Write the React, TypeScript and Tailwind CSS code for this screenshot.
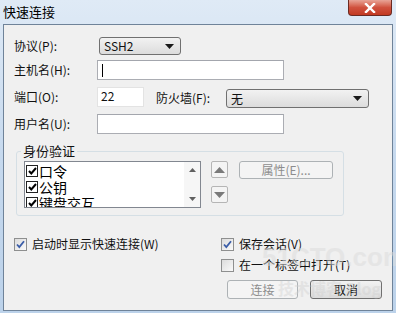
import React from 'react';

const FONT = { fontFamily: '"SimSun", "Noto Sans CJK SC", "Liberation Sans", sans-serif' };

function Caret() {
  return (
    <svg width="9" height="5" viewBox="0 0 9 5">
      <path d="M0 0h9L4.5 5z" fill="#1a1a1a" />
    </svg>
  );
}

function Select({ value, className }: { value: string; className: string }) {
  return (
    <div
      className={`flex items-center justify-between rounded-[3px] border border-[#707070] bg-gradient-to-b from-[#f2f2f2] to-[#dcdcdc] pl-[4px] pr-[6px] text-[12px] text-[#111] ${className}`}
    >
      <span>{value}</span>
      <Caret />
    </div>
  );
}

function TextBox({ cursor = false, className }: { cursor?: boolean; className: string }) {
  return (
    <div
      className={`flex items-center border border-[#abadb3] border-t-[#a3a6ad] bg-white pl-[4px] ${className}`}
    >
      {cursor && <div className="h-[13px] w-[1px] bg-black" />}
    </div>
  );
}

function WinCheck({ checked, label }: { checked: boolean; label: string }) {
  return (
    <div className="flex h-[14px] items-center gap-[5px] text-[12px] text-[#111]">
      <div className="flex h-[13px] w-[13px] items-center justify-center border border-[#8e8f8f] bg-gradient-to-br from-[#dcdcdc] to-[#fafafa]">
        {checked && (
          <svg width="9" height="9" viewBox="0 0 9 9">
            <path d="M1 4.5l2.3 2.5L8 1.2" fill="none" stroke="#3a5da8" strokeWidth="1.8" />
          </svg>
        )}
      </div>
      <span>{label}</span>
    </div>
  );
}

function ListItem({ label }: { label: string }) {
  return (
    <div className="flex h-[16px] items-center gap-[1px] text-[14px] leading-none text-black">
      <div className="flex h-[12px] w-[12px] items-center justify-center border border-[#222] bg-white">
        <svg width="9" height="8" viewBox="0 0 9 8">
          <path d="M1 4l2.3 2.5L8 1" fill="none" stroke="#000" strokeWidth="2" />
        </svg>
      </div>
      <span>{label}</span>
    </div>
  );
}

function ArrowBtn({ up }: { up: boolean }) {
  return (
    <div className="flex h-[17px] w-[17px] items-center justify-center rounded-[2px] border border-[#b5b5b5] bg-[#f4f4f4]">
      <svg width="11" height="6" viewBox="0 0 11 6">
        <path d={up ? 'M0 6h11L5.5 0z' : 'M0 0h11L5.5 6z'} fill="#7a7a7a" />
      </svg>
    </div>
  );
}

export default function App() {
  return (
    <div
      className="relative flex h-[313px] w-[396px] flex-col overflow-hidden bg-gradient-to-b from-[#dfeaf6] via-[#c6d9ee] to-[#bcd2ea]"
      style={FONT}
    >
      {/* Title bar */}
      <div className="relative flex h-[24px] items-start pl-[3px] pt-[2px]">
        <span className="text-[13px] text-black">快速连接</span>
        <div className="absolute right-[4px] top-0 flex h-[16px] w-[44px] items-center justify-center rounded-b-[4px] border border-t-0 border-[#6b2a22] bg-gradient-to-b from-[#e8a497] via-[#d0513e] to-[#c23a22]">
          <svg width="12" height="10" viewBox="0 0 12 10">
            <path d="M2 1l8 8M10 1L2 9" stroke="white" strokeWidth="2.4" strokeLinecap="square" />
          </svg>
        </div>
      </div>

      {/* Client area */}
      <div className="mx-[3px] flex h-[287px] flex-col border border-[#6f8399] bg-[#f0f0f0] pl-[10px] text-[12px] text-[#111]">
        <div className="mt-[12px] flex h-[18px] items-center">
          <div className="w-[85px]">协议(P):</div>
          <Select value="SSH2" className="h-[18px] w-[82px]" />
        </div>

        <div className="mt-[5px] flex h-[20px] items-center">
          <div className="w-[83px]">主机名(H):</div>
          <TextBox cursor className="h-[20px] w-[187px]" />
        </div>

        <div className="mt-[7px] flex h-[20px] items-start">
          <div className="flex h-[20px] w-[83px] items-center">端口(O):</div>
          <div className="h-[20px] w-[47px] border border-[#e3e3e3] bg-white pl-[3px] text-[12px] leading-[16px]">22</div>
          <div className="ml-[12px] mt-[2px] flex h-[18px] w-[70px] items-center">防火墙(F):</div>
          <Select value="无" className="mt-[2px] h-[19px] w-[143px]" />
        </div>

        <div className="mt-[7px] flex h-[20px] items-center">
          <div className="w-[83px]">用户名(U):</div>
          <TextBox className="h-[20px] w-[187px]" />
        </div>

        {/* Auth group */}
        <div className="relative ml-[2px] mt-[17px] h-[65px] w-[328px] rounded-[3px] border border-[#d5dfe5]">
          <div className="absolute -top-[9px] left-[4px] bg-[#f0f0f0] px-[2px] text-[13px] leading-[16px]">身份验证</div>
          <div className="ml-[7px] mt-[9px] flex items-start">
            <div className="flex h-[47px] w-[177px] overflow-hidden border border-[#828790] bg-white">
              <div className="flex-1 pl-[1px] pt-[1px]">
                <ListItem label="口令" />
                <ListItem label="公钥" />
                <ListItem label="键盘交互" />
              </div>
              <div className="flex w-[16px] flex-col items-center justify-between bg-[#f6f6f6] py-[6px]">
                <svg width="7" height="4" viewBox="0 0 7 4"><path d="M0 4h7L3.5 0z" fill="#606060" /></svg>
                <svg width="7" height="4" viewBox="0 0 7 4"><path d="M0 0h7L3.5 4z" fill="#606060" /></svg>
              </div>
            </div>
            <div className="ml-[10px] flex flex-col gap-[8px]">
              <ArrowBtn up />
              <ArrowBtn up={false} />
            </div>
            <div className="ml-[11px] flex h-[18px] w-[94px] items-center justify-center rounded-[3px] border border-[#adb2b5] bg-[#f4f4f4] text-[#8d8d8d]">
              属性(E)...
            </div>
          </div>
        </div>

        <div className="mt-[21px] flex">
          <div className="w-[207px]">
            <WinCheck checked label="启动时显示快速连接(W)" />
          </div>
          <div className="flex flex-col gap-[7px]">
            <WinCheck checked label="保存会话(V)" />
            <WinCheck checked={false} label="在一个标签中打开(T)" />
          </div>
        </div>

        <div className="mt-[8px] flex justify-end gap-[12px] pr-[10px]">
          <div className="flex h-[19px] w-[71px] items-center justify-center rounded-[3px] border border-[#adb2b5] bg-[#f4f4f4] text-[#8d8d8d]">
            连接
          </div>
          <div className="flex h-[19px] w-[72px] items-center justify-center rounded-[3px] border border-[#707070] bg-gradient-to-b from-[#f2f2f2] to-[#dddddd] text-[#111]">
            取消
          </div>
        </div>
      </div>

      {/* faint site watermark lying over the dialog */}
      <div
        className="pointer-events-none absolute left-[262px] top-[244px] text-[26px] font-bold leading-none text-[#dcdcdc] opacity-50"
        style={{ fontFamily: '"Liberation Sans", sans-serif' }}
      >
        51CTO.com
      </div>
      <div className="pointer-events-none absolute left-[278px] top-[280px] text-[16px] font-bold leading-none text-[#cfcfcf] opacity-40">
        技术博客 Blog
      </div>
    </div>
  );
}
